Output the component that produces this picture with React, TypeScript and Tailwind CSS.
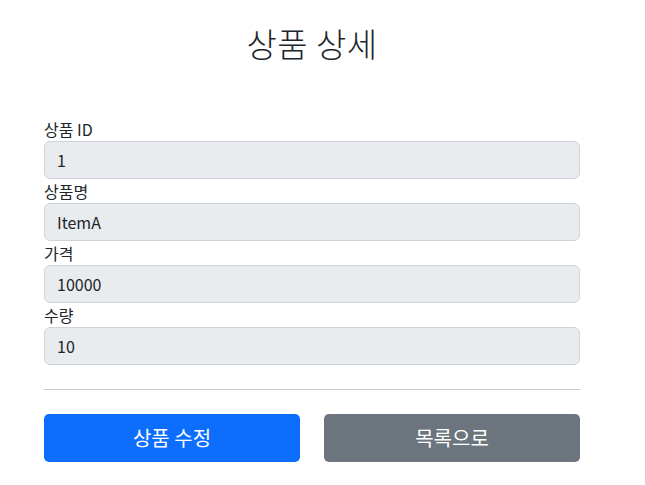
import React from "react";

const font = { fontFamily: '"Noto Sans CJK KR", "Noto Sans", sans-serif' };

function Field({ label, value }: { label: string; value: string }) {
  return (
    <div className="flex flex-col">
      <label className="h-[24px] text-[16px] leading-[24px] text-[#212529]">{label}</label>
      <div className="h-[38px] rounded-[6px] border border-[#ced4da] bg-[#e9ecef] px-[12px] text-[16px] leading-[36px] text-[#212529]">
        {value}
      </div>
    </div>
  );
}

export default function App() {
  return (
    <div className="min-h-[485px] w-[645px] bg-white" style={font}>
      <div className="ml-[44px] w-[536px]">
        <div className="flex h-[117px] justify-center pt-[24px]">
          <h2 className="h-[38px] text-[33px] leading-[38px] font-light tracking-[0.5px] text-[#212529]">상품 상세</h2>
        </div>
        <Field label="상품 ID" value="1" />
        <Field label="상품명" value="ItemA" />
        <Field label="가격" value="10000" />
        <Field label="수량" value="10" />
        <div className="mt-[24px] h-px bg-[#c8c9ca]" />
        <div className="mt-[24px] grid grid-cols-2 gap-[24px]">
          <button className="h-[48px] rounded-[5px] bg-[#0d6efd] text-[20px] leading-[30px] text-white">상품 수정</button>
          <button className="h-[48px] rounded-[5px] bg-[#6c757d] text-[20px] leading-[30px] text-white">목록으로</button>
        </div>
      </div>
    </div>
  );
}
